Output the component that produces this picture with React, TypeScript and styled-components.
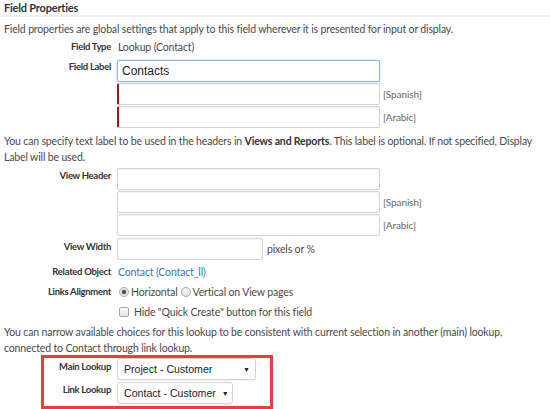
import React from "react";
import styled, { createGlobalStyle } from "styled-components";

const Global = createGlobalStyle`
  html, body { margin: 0; padding: 0; background: #fff; }
  body { font-family: Lato, "Open Sans", sans-serif; color: #4a4a4a; }
  * { box-sizing: border-box; }
`;

const Page = styled.div`
  width: 550px;
  height: 409px;
  overflow: hidden;
`;

const Header = styled.div`
  font-weight: 700;
  font-size: 11px;
  letter-spacing: -0.2px;
  color: #333;
  padding: 0 4px;
  height: 17px;
  line-height: 15px;
  border-bottom: 2px solid #f0f0f0;
`;

const Body = styled.div`
  padding: 0 4px;
`;

const Para = styled.p<{ $top?: number }>`
  margin: 0;
  padding-top: ${(p) => p.$top ?? 0}px;
  font-size: 10.5px;
  letter-spacing: -0.15px;
  line-height: 16px;
  color: #4a4a4a;
  white-space: nowrap;
  b { font-weight: 700; color: #333; }
`;

const Row = styled.div<{ $mt?: number }>`
  display: grid;
  grid-template-columns: 107px 1fr;
  column-gap: 6px;
  margin-top: ${(p) => p.$mt ?? 0}px;
`;

const Label = styled.div<{ $pt?: number }>`
  text-align: right;
  font-size: 9.5px;
  letter-spacing: -0.3px;
  font-weight: 700;
  color: #333;
  padding-top: ${(p) => p.$pt ?? 0}px;
  line-height: 14px;
  white-space: nowrap;
`;

const Value = styled.div`
  font-size: 10.5px;
  letter-spacing: -0.15px;
  line-height: 14px;
  color: #4a4a4a;
  padding-left: 1px;
  white-space: nowrap;
  display: flex;
  align-items: center;
`;

const Link = styled.span`
  color: #3676c0;
`;

const Stack = styled.div`
  display: flex;
  flex-direction: column;
  gap: 1px;
`;

const InputLine = styled.div`
  display: flex;
  align-items: center;
  gap: 3px;
`;

const TextInput = styled.div<{ $w?: number; $focus?: boolean; $lang?: boolean }>`
  width: ${(p) => p.$w ?? 263}px;
  height: 22px;
  border: 1px solid ${(p) => (p.$focus ? "#86b7e8" : "#d3d3d3")};
  border-left: ${(p) => (p.$lang ? "2px solid #951c1c" : `1px solid ${p.$focus ? "#86b7e8" : "#d3d3d3"}`)};
  border-radius: 2px;
  box-shadow: ${(p) => (p.$focus ? "0 0 2px rgba(102,160,230,0.55)" : "inset 0 1px 1px rgba(0,0,0,0.05)")};
  font-family: "Liberation Sans", Arial, sans-serif;
  font-size: 12px;
  color: #222;
  padding: 0 4px;
  line-height: 20px;
  background: #fff;
`;

const Hint = styled.span`
  font-size: 10px;
  letter-spacing: -0.1px;
  color: #666;
`;

const Radio = styled.span<{ $on?: boolean }>`
  display: inline-block;
  flex: none;
  width: 10px;
  height: 10px;
  border-radius: 50%;
  border: 1px solid #a9a9a9;
  background: ${(p) =>
    p.$on
      ? "radial-gradient(circle, #555 0 2px, #e9e9e9 2.6px)"
      : "linear-gradient(#f6f6f6, #e2e2e2)"};
  margin: 0 2px 0 ${(p) => (p.$on ? 1 : 3)}px;
`;

const Check = styled.span`
  display: inline-block;
  flex: none;
  width: 10px;
  height: 10px;
  border: 1px solid #a9a9a9;
  border-radius: 2px;
  background: linear-gradient(#fafafa, #e4e4e4);
  margin: 0 5px 0 1px;
`;

const Highlight = styled.div`
  margin: -1px 0 0 37px;
  width: 232px;
  height: 54px;
  border: 3px solid #e4403f;
  display: flex;
  flex-direction: column;
`;

const HRow = styled.div<{ $mt?: number }>`
  display: grid;
  grid-template-columns: 67px 1fr;
  column-gap: 6px;
  margin-top: ${(p) => p.$mt ?? 0}px;
`;

const Select = styled.div<{ $w: number }>`
  width: ${(p) => p.$w}px;
  height: 22px;
  border: 1px solid #d3d3d3;
  border-radius: 3px;
  background: #fff;
  box-shadow: 0 1px 1px rgba(0, 0, 0, 0.05);
  display: flex;
  align-items: center;
  justify-content: space-between;
  gap: 6px;
  padding: 0 5px 0 6px;
  font-family: "Liberation Sans", Arial, sans-serif;
  font-size: 10.6px;
  color: #222;
  white-space: nowrap;
`;

const Arrow = styled.span`
  font-size: 7px;
  color: #222;
`;

export default function App() {
  return (
    <Page>
      <Global />
      <Header>Field Properties</Header>
      <Body>
        <Para $top={4}>
          Field properties are global settings that apply to this field wherever it is presented for input or display.
        </Para>
        <Row $mt={3}>
          <Label>Field Type</Label>
          <Value>Lookup (Contact)</Value>
        </Row>
        <Row $mt={6}>
          <Label>Field Label</Label>
          <Stack>
            <InputLine>
              <TextInput $focus>Contacts</TextInput>
            </InputLine>
            <InputLine>
              <TextInput $lang />
              <Hint>[Spanish]</Hint>
            </InputLine>
            <InputLine>
              <TextInput $lang />
              <Hint>[Arabic]</Hint>
            </InputLine>
          </Stack>
        </Row>
        <Para $top={5}>
          You can specify text label to be used in the headers in <b>Views and Reports</b>. This label is optional. If not specified, Display
          <br />
          Label will be used.
        </Para>
        <Row $mt={3}>
          <Label $pt={1}>View Header</Label>
          <Stack>
            <InputLine>
              <TextInput />
            </InputLine>
            <InputLine>
              <TextInput />
              <Hint>[Spanish]</Hint>
            </InputLine>
            <InputLine>
              <TextInput />
              <Hint>[Arabic]</Hint>
            </InputLine>
          </Stack>
        </Row>
        <Row $mt={2}>
          <Label $pt={2}>View Width</Label>
          <InputLine>
            <TextInput $w={146} />
            <Value>pixels or %</Value>
          </InputLine>
        </Row>
        <Row $mt={5}>
          <Label>Related Object</Label>
          <Value>
            <Link>Contact (Contact_ll)</Link>
          </Value>
        </Row>
        <Row $mt={6}>
          <Label>Links Alignment</Label>
          <Value>
            <Radio $on />
            Horizontal
            <Radio />
            Vertical on View pages
          </Value>
        </Row>
        <Row $mt={6}>
          <Label />
          <Value>
            <Check />
            Hide "Quick Create" button for this field
          </Value>
        </Row>
        <Para $top={5}>
          You can narrow available choices for this lookup to be consistent with current selection in another (main) lookup,
          <br />
          connected to Contact through link lookup.
        </Para>
        <Highlight>
          <HRow>
            <Label $pt={2}>Main Lookup</Label>
            <Select $w={139}>
              Project - Customer
              <Arrow>▼</Arrow>
            </Select>
          </HRow>
          <HRow $mt={2}>
            <Label $pt={1}>Link Lookup</Label>
            <Select $w={116}>
              Contact - Customer
              <Arrow>▼</Arrow>
            </Select>
          </HRow>
        </Highlight>
      </Body>
    </Page>
  );
}
